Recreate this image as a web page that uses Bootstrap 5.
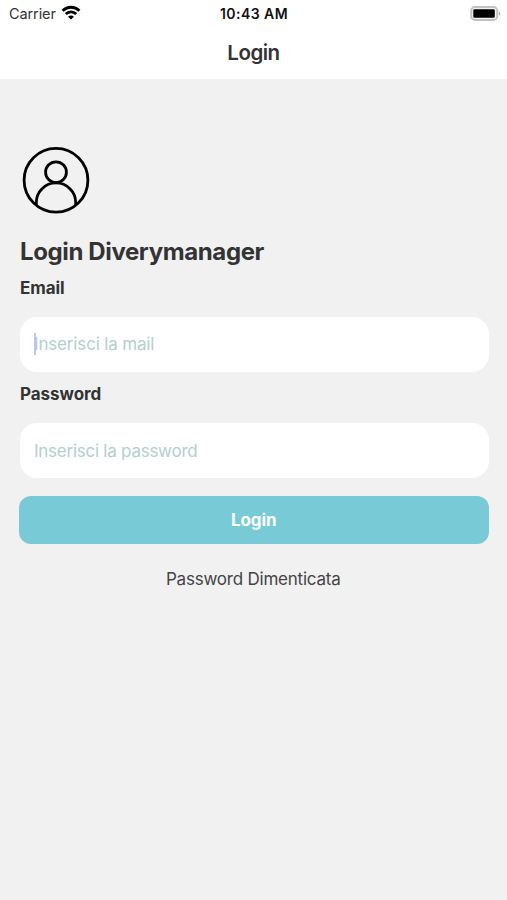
<!DOCTYPE html>
<html lang="it">
<head>
<meta charset="utf-8">
<meta name="viewport" content="width=device-width, initial-scale=1">
<title>Login</title>
<link href="https://cdn.jsdelivr.net/npm/bootstrap@5.3.0/dist/css/bootstrap.min.css" rel="stylesheet">
<style>
body { font-family: Inter, "Liberation Sans", sans-serif; background: #f1f1f1; color: #333; min-height: 900px; }
.top-area { height: 78.5px; }
.status-bar { height: 27px; padding: 0 6px 0 9px; color: #111; line-height: 27px; }
.status-side { flex: 1 1 0; }
.carrier { font-size: 14.5px; color: #333; letter-spacing: -.1px; }
.wifi { margin-left: 5px; margin-top: -2px; }
.clock { font-size: 14px; font-weight: 600; letter-spacing: .45px; margin-right: 2px; }
.screen-title { font-size: 20.5px; font-weight: 600; line-height: 50px; letter-spacing: -.5px; padding-top: 1px; }
.login-form { padding: 67.5px 18.5px 0 19px; }
.avatar { width: 68px; height: 68px; margin-left: 3px; }
.form-heading { font-size: 24px; font-weight: 700; line-height: 30px; letter-spacing: -.38px; margin: 22.5px 0 10px 1px; }
.field-label { font-size: 17px; font-weight: 700; line-height: 22px; letter-spacing: -.05px; margin: 0 0 18px 1px; }
.field-group { margin-bottom: 11.5px; }
.field-box { height: 55px; border-radius: 17px; padding: 0 14px; font-size: 17px; letter-spacing: -.25px; color: #212529; }
.field-box-inset { margin-left: 1px; width: calc(100% - 1px); }
.field-box::placeholder { color: #b3d0cd; opacity: 1; }
#mail { letter-spacing: -.16px; }
.caret { left: 15px; top: 16px; width: 2px; height: 22px; background: #a9b4f5; opacity: .75; }
.btn-enter { height: 47.5px; margin-top: 18px; padding-top: 1px; border-radius: 12px; background: #79cad7; font-size: 17px; font-weight: 700; letter-spacing: -.1px; }
.btn-enter:hover { background: #6bbdca; }
.forgot { margin-top: 24px; padding-right: 1px; font-size: 17px; line-height: 22px; letter-spacing: -.22px; color: #444; }
</style>
</head>
<body>
<header class="top-area bg-white">
  <div class="status-bar d-flex align-items-center">
    <div class="status-side d-flex align-items-center">
      <span class="carrier">Carrier</span>
      <svg class="wifi" width="20" height="15" viewBox="0 0 20 15" fill="none" stroke="#000" stroke-width="2.9" aria-hidden="true">
        <path d="M1.6 5.7a12 12 0 0 1 16.8 0M4.8 9a7.5 7.5 0 0 1 10.4 0"/>
        <path d="M10 14.6l-2.9-2.9a4 4 0 0 1 5.8 0z" fill="#000" stroke="none"/>
      </svg>
    </div>
    <div class="clock">10:43 AM</div>
    <div class="status-side d-flex justify-content-end">
      <svg width="31" height="16" viewBox="0 0 31 16" aria-hidden="true">
        <rect x="1.2" y="1" width="26" height="13" rx="3.6" fill="#f4f4f4" stroke="#c2c2c2" stroke-width="1.9"/>
        <rect x="3.3" y="3.2" width="21.5" height="8.6" rx="1.2" fill="#000"/>
        <path d="M28.8 5.2q3 2.3 0 4.6z" fill="#a8a8a8"/>
      </svg>
    </div>
  </div>
  <h1 class="screen-title text-center mb-0">Login</h1>
</header>
<main>
  <form class="login-form d-flex flex-column">
    <svg class="avatar" viewBox="0 0 68 68" fill="none" stroke="#000" stroke-width="2.8" aria-hidden="true">
      <circle cx="34" cy="34.3" r="31.9"/>
      <circle cx="34" cy="26.2" r="10.4"/>
      <path d="M14.3 59.1V56.6a19.7 19.7 0 0 1 39.4 0v2.5"/>
    </svg>
    <h2 class="form-heading">Login Diverymanager</h2>
    <label class="field-label" for="mail">Email</label>
    <div class="field-group position-relative">
      <input id="mail" type="email" class="form-control field-box field-box-inset border-0" placeholder="Inserisci la mail">
      <span class="caret position-absolute"></span>
    </div>
    <label class="field-label" for="pwd">Password</label>
    <input id="pwd" type="password" class="form-control field-box field-box-inset border-0" placeholder="Inserisci la password">
    <button type="button" class="btn btn-enter border-0 text-white w-100 px-0 pb-0">Login</button>
    <a href="#" class="forgot text-center text-decoration-none">Password Dimenticata</a>
  </form>
</main>
<script src="https://cdn.jsdelivr.net/npm/bootstrap@5.3.0/dist/js/bootstrap.bundle.min.js"></script>
</body>
</html>
